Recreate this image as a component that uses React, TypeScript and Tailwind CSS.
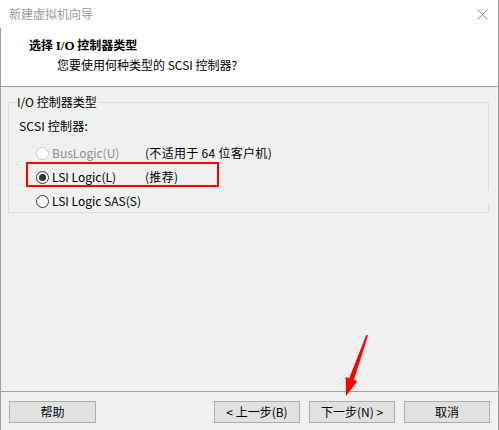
import React from "react"

const cjk = "font-['Noto_Sans_CJK_SC','Noto_Sans',sans-serif]"

function Radio({ checked, disabled }: { checked?: boolean; disabled?: boolean }) {
  return (
    <span
      className={`w-[13px] h-[13px] rounded-full border flex items-center justify-center bg-white shrink-0 ${
        disabled ? "border-[#cccccc]" : "border-[#333333]"
      }`}
    >
      {checked && <span className="w-[7px] h-[7px] rounded-full bg-[#333333]" />}
    </span>
  )
}

function Btn({ label, w = "w-[86px]" }: { label: string; w?: string }) {
  return (
    <div className={`${w} h-[22px] border border-[#adadad] bg-[#e1e1e1] flex items-center justify-center text-[12px] text-black`}>
      {label}
    </div>
  )
}

export default function App() {
  const options = [
    { label: "BusLogic(U)", note: "(不适用于 64 位客户机)", disabled: true },
    { label: "LSI Logic(L)", note: "(推荐)", checked: true },
    { label: "LSI Logic SAS(S)", note: "" },
  ]

  return (
    <div className={`relative w-[499px] h-[430px] flex flex-col bg-[#f0f0f0] overflow-hidden ${cjk} text-[12px] text-black`}>
      {/* title bar */}
      <div className="h-[28px] bg-white border-r border-[#a0a0a0] flex items-center justify-between pl-[9px] pr-[10px]">
        <span className="text-[#9a9a9a]">新建虚拟机向导</span>
        <svg width="11" height="11" viewBox="0 0 11 11">
          <path d="M0.5 0.5 L10.5 10.5 M10.5 0.5 L0.5 10.5" stroke="#8a8a8a" strokeWidth="1" />
        </svg>
      </div>

      {/* header */}
      <div className="h-[59px] bg-white border-x border-b border-[#a0a0a0] flex flex-col pt-[8px]">
        <div className="pl-[28px] font-bold leading-[18px]">
          选择 <span className="font-['Liberation_Serif',serif] text-[13px]">I/O</span> 控制器类型
        </div>
        <div className="pl-[56px] leading-[18px] mt-[1px]">您要使用何种类型的 SCSI 控制器?</div>
      </div>

      {/* body */}
      <div className="flex-1 border-x border-[#a0a0a0] pt-[15px] pl-[7px]">
        <div className="relative w-[481px] h-[111px] border border-[#dcdcdc] pl-[10px] pt-[14px]">
          <span className="absolute left-[7px] top-[-9px] px-[1px] bg-[#f0f0f0] leading-[16px]">I/O 控制器类型</span>
          <span className="absolute right-[-1px] top-[87px] w-[1px] h-[13px] bg-[#f0f0f0]" />
          <div className="leading-[18px] tracking-[0.2px]">SCSI 控制器:</div>
          <div className="flex flex-col mt-[6px] pl-[17px]">
            {options.map((o) => (
              <div key={o.label} className="h-[24px] flex items-center">
                <Radio checked={o.checked} disabled={o.disabled} />
                <span className={`ml-[3px] w-[93px] ${o.disabled ? "text-[#8d8d8d]" : ""}`}>{o.label}</span>
                <span className="tracking-[0.3px]">{o.note}</span>
              </div>
            ))}
          </div>
          {/* red highlight */}
          <div className="absolute left-[17px] top-[59px] w-[193px] h-[25px] border-2 border-[#ff0000]" />
        </div>
      </div>

      {/* footer */}
      <div className="h-[39px] border-t border-x border-[#a0a0a0] flex items-start pt-[9px] pl-[8px]">
        <Btn label="帮助" w="w-[87px]" />
        <div className="ml-auto mr-[8px] flex gap-[9px]">
          <Btn label="< 上一步(B)" />
          <Btn label="下一步(N) >" />
          <Btn label="取消" />
        </div>
      </div>

      {/* annotation arrow */}
      <svg className="absolute left-0 top-0 pointer-events-none" width="499" height="430">
        <polygon
          points="366.3,334.8 368,335.4 354,379.8 357.3,381.2 346,396 345.7,377 349.2,378.2"
          fill="#ff0000"
        />
      </svg>
    </div>
  )
}
